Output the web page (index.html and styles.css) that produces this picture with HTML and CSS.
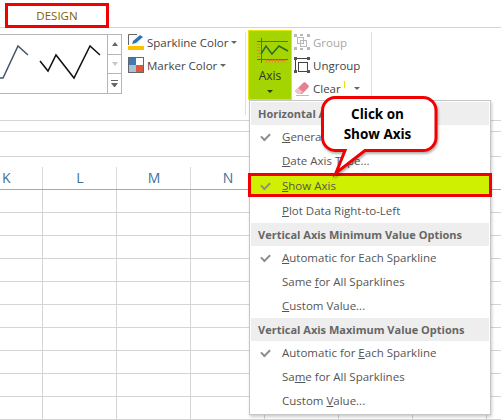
FILE: index.html
```html
<!DOCTYPE html>
<html lang="en">
<head>
<meta charset="utf-8">
<title>Sparkline Axis menu</title>
<link rel="stylesheet" href="styles.css">
</head>
<body>
<div class="page">
  <div class="tabbar"><div class="tab">DESIGN</div></div>
  <div class="ribbon">
    <div class="gallery">
      <div class="gallery-items">
        <svg class="spark" width="107" height="58" viewBox="0 0 107 58"><polyline points="-2,43 3,43 18,11 28,20" fill="none" stroke="#44546a" stroke-width="1.500"/><polyline points="40,26 48,36 56,20 74,43 90,11 100,20" fill="none" stroke="#111" stroke-width="1.500"/></svg>
      </div>
      <div class="scroller">
        <div class="scroll-btn"><span class="up"></span></div>
        <div class="scroll-btn"><span class="down"></span></div>
        <div class="scroll-btn"><span class="more"></span></div>
      </div>
    </div>
    <div class="colors">
      <div class="color-row">
        <svg width="16" height="16" viewBox="0 0 16 16"><path d="M9 .5H.5V11" fill="none" stroke="#666"/><path d="M4 10l1-3 7-6 3 2-7 6z" fill="#2e75b6"/><rect y="12" width="16" height="4" fill="#ffc000"/></svg>
        <span>Sparkline Color</span><span class="caret"></span>
      </div>
      <div class="color-row">
        <svg width="16" height="16" viewBox="0 0 16 16"><rect x="1" y="1" width="7" height="7" fill="#3f7ab5"/><rect x="8" y="1" width="7" height="7" fill="#fff"/><rect x="1" y="8" width="7" height="7" fill="#a5c1dc"/><rect x="8" y="8" width="7" height="7" fill="#d9593a"/><rect x=".5" y=".5" width="15" height="15" fill="none" stroke="#666"/></svg>
        <span>Marker Color</span><span class="caret"></span>
      </div>
    </div>
    <div class="axis-group">
      <div class="axis-btn">
        <svg class="axis-icon" width="32" height="26" viewBox="0 0 32 26"><path d="M0 3.500h31M0 21.500h31M4.500 0v25" fill="none" stroke="#6b6b1e"/><path d="M0 6.500h3M0 9.500h3M0 12.500h3M0 15.500h3M0 18.500h3" stroke="#e58a1f" fill="none"/><path d="M9 23h20" stroke="#e58a1f" stroke-dasharray="1 2" stroke-width="3" fill="none"/><path d="M9 22.500h20" stroke="#e58a1f" fill="none"/><polyline points="4,16 9,8 15,16 22,8 31,13" fill="none" stroke="#2f6a2c" stroke-width="1.500"/></svg>
        <span class="axis-label">Axis</span>
        <span class="caret dark"></span>
      </div>
      <div class="group-list">
        <div class="group-row muted">
          <svg width="16" height="16" viewBox="0 0 16 16"><g fill="none" stroke="#b8b8b8"><rect x="3.500" y="3.500" width="6" height="6"/><rect x="6.500" y="6.500" width="6" height="6"/></g><g fill="#b8b8b8"><rect width="3" height="3"/><rect x="6" width="3" height="2"/><rect x="13" width="3" height="3"/><rect y="13" width="3" height="3"/><rect x="6" y="14" width="3" height="2"/><rect x="13" y="13" width="3" height="3"/></g></svg>
          <span>Group</span>
        </div>
        <div class="group-row">
          <svg width="16" height="16" viewBox="0 0 16 16"><g fill="none" stroke="#444"><path d="M1.500 3v10M3 1.500h10"/><rect x="4.500" y="5.500" width="9" height="9"/></g><g fill="#555"><rect width="3" height="3"/><rect x="13" width="3" height="3"/><rect y="13" width="3" height="3"/><rect x="13" y="13" width="3" height="3"/></g></svg>
          <span>Ungroup</span>
        </div>
        <div class="group-row">
          <svg width="16" height="16" viewBox="0 0 16 16"><path d="M1 11l8-8 2-1 4 4-1 2-6 6H4z" fill="#e8808f"/><path d="M1 11l3-3 5 4-3 2H4z" fill="#f3c2c8"/><path d="M2 15.500h13" stroke="#bbb"/></svg>
          <span>Clear</span><span class="clear-tick"></span><span class="caret clear-caret"></span>
        </div>
      </div>
    </div>
  </div>
  <div class="strip"></div>
  <div class="formula"></div>
  <div class="headers">
    <div class="col k">K</div><div class="col">L</div><div class="col">M</div><div class="col">N</div><div class="col">O</div><div class="col">P</div><div class="col">Q</div>
  </div>
  <div class="cells"></div>

  <div class="menu">
    <div class="menu-head">Horizontal Axis Options</div>
    <div class="menu-item checked"><span><u>G</u>eneral Axis Type</span></div>
    <div class="menu-item"><span><u>D</u>ate Axis Type...</span></div>
    <div class="menu-item checked hot"><span><u>S</u>how Axis</span></div>
    <div class="menu-item tall"><span><u>P</u>lot Data Right-to-Left</span></div>
    <div class="menu-head">Vertical Axis Minimum Value Options</div>
    <div class="menu-item checked"><span><u>A</u>utomatic for Each Sparkline</span></div>
    <div class="menu-item"><span>Same <u>f</u>or All Sparklines</span></div>
    <div class="menu-item"><span><u>C</u>ustom Value...</span></div>
    <div class="menu-head">Vertical Axis Maximum Value Options</div>
    <div class="menu-item checked"><span>Automatic for <u>E</u>ach Sparkline</span></div>
    <div class="menu-item"><span>Sa<u>m</u>e for All Sparklines</span></div>
    <div class="menu-item"><span>Custom <u>V</u>alue...</span></div>
  </div>

  <div class="callout">
    <svg class="callout-shape" width="126" height="86" viewBox="0 0 126 86"><path d="M15 2.500H103a13 13 0 0 1 13 13V42.500a13 13 0 0 1-13 13H45L16 78 25 55.500H15A13 13 0 0 1 2.500 42.500V15.500A13 13 0 0 1 15 2.500Z" fill="#fff" stroke="#f00000" stroke-width="3"/></svg>
    <div class="callout-text">Click on<br>Show Axis</div>
  </div>
</div>
</body>
</html>
```
FILE: styles.css
```css
* { box-sizing: border-box; }
html, body { margin: 0; padding: 0; background: #fff; }
.page {
  position: relative;
  width: 501px;
  height: 420px;
  overflow: hidden;
  font-family: "Open Sans", "Noto Sans", sans-serif;
  font-size: 11.5px;
  color: #444;
}
.tabbar { height: 28px; border-bottom: 1px solid #d4d4d4; padding: 3px 0 0 5px; }
.tab {
  width: 104px;
  height: 25px;
  border: 3px solid #f00000;
  color: #7f6000;
  text-align: center;
  line-height: 19px;
  background: #fff;
}
.ribbon {
  height: 93px;
  border-bottom: 1px solid #d4d4d4;
  display: flex;
  align-items: flex-start;
  background: #fff;
}
.gallery { display: flex; width: 122px; height: 60px; margin-top: 6px; border: 1px solid #b5b5b5; border-left: 0; }
.gallery-items { width: 107px; }
.spark { display: block; }
.scroller { width: 14px; border-left: 1px solid #b5b5b5; display: flex; flex-direction: column; }
.scroll-btn { flex: 1; display: flex; align-items: center; justify-content: center; border-bottom: 1px solid #b5b5b5; }
.scroll-btn:last-child { border-bottom: 0; }
.up { border: 3px solid transparent; border-bottom: 4px solid #666; border-top: 0; }
.down { border: 3px solid transparent; border-top: 4px solid #c8c8c8; border-bottom: 0; }
.more { width: 7px; height: 7px; border-top: 1px solid #666; }
.more::after { content: ""; display: block; margin-top: 2px; border: 3.5px solid transparent; border-top: 4px solid #666; border-bottom: 0; }
.colors { margin: 6px 0 0 6px; width: 116px; display: flex; flex-direction: column; gap: 7px; }
.color-row { display: flex; align-items: center; height: 16px; gap: 3px; white-space: nowrap; }
.caret { display: inline-block; border: 3px solid transparent; border-top: 3px solid #666; border-bottom: 0; margin-left: 0; }
.caret.dark { border-top-color: #2b3a10; margin: 6px 0 0; }
.axis-group {
  display: flex;
  align-items: flex-start;
  width: 127px;
  height: 83px;
  margin: 4px 0 0 1px;
  border-left: 1px solid #e0e0e0;
  border-right: 1px solid #e0e0e0;
  padding-left: 2px;
}
.axis-btn {
  width: 44px;
  height: 70px;
  margin-top: -2px;
  background: #a4d500;
  border: 1px solid #e6e600;
  display: flex;
  flex-direction: column;
  align-items: center;
  padding-top: 7px;
  color: #333;
}
.axis-icon { display: block; margin-left: 6px; }
.axis-label { margin-top: 4px; line-height: 16px; font-size: 12px; }
.group-list { margin: 2px 0 0 2px; display: flex; flex-direction: column; gap: 7px; }
.group-row { display: flex; align-items: center; height: 16px; gap: 3px; white-space: nowrap; }
.group-row.muted { color: #a6a6a6; }
.clear-tick { width: 1px; height: 7px; background: #e6e600; margin: -7px 0 0 0; }
.clear-caret { margin-left: 6px; }
.strip { height: 11px; border-bottom: 1px solid #d4d4d4; }
.formula { height: 25px; border-bottom: 1px solid #d4d4d4; }
.headers { display: flex; height: 33px; border-bottom: 1px solid #a8a8a8; }
.col {
  width: 74px;
  flex: none;
  text-align: center;
  color: #3f6f98;
  font-size: 14px;
  line-height: 41px;
  background: linear-gradient(#d9d9d9, #d9d9d9) right bottom / 1px 22px no-repeat;
}
.col.k { width: 43px; text-align: left; padding-left: 2px; }
.cells {
  height: 231px;
  background-image: linear-gradient(to right, #d4d4d4 1px, transparent 1px), linear-gradient(#d4d4d4 1px, transparent 1px);
  background-size: 74px 100%, 100% 23px;
  background-position: 42px 0, 0 22px;
}
.menu {
  position: absolute;
  left: 249px;
  top: 100px;
  width: 242px;
  height: 315px;
  padding: 1px;
  background: #fff;
  border: 1px solid #c6c6c6;
  box-shadow: 1px 2px 3px rgba(0,0,0,.2);
}
.menu-head {
  height: 23px;
  background: #eeeeee;
  font-weight: 700;
  font-size: 11px;
  color: #666;
  padding-left: 7px;
  line-height: 23px;
  white-space: nowrap;
}
.menu-item {
  position: relative;
  height: 24px;
  line-height: 24px;
  padding-left: 31px;
  color: #555;
  white-space: nowrap;
}
.menu-item.tall { height: 26px; line-height: 27px; }
.menu-item.checked::before {
  content: "";
  position: absolute;
  left: 10px;
  top: 8px;
  width: 7px;
  height: 4px;
  border-left: 2px solid #8c8c8c;
  border-bottom: 2px solid #8c8c8c;
  transform: rotate(-45deg);
}
.menu-item.hot {
  margin: 0 -3px;
  padding-left: 31px;
  background: #cff000;
  border: 3px solid #f00000;
  line-height: 20px;
}
.menu-item.hot::before { left: 10px; top: 6px; }
.callout { position: absolute; left: 320px; top: 95px; width: 126px; height: 86px; }
.callout-shape { display: block; filter: drop-shadow(1px 2px 1px rgba(0,0,0,.3)); }
.callout-text {
  position: absolute;
  left: 2px;
  top: 10px;
  width: 111px;
  text-align: center;
  font-weight: 700;
  font-size: 13.5px;
  line-height: 19.500px;
  color: #000;
}
```
